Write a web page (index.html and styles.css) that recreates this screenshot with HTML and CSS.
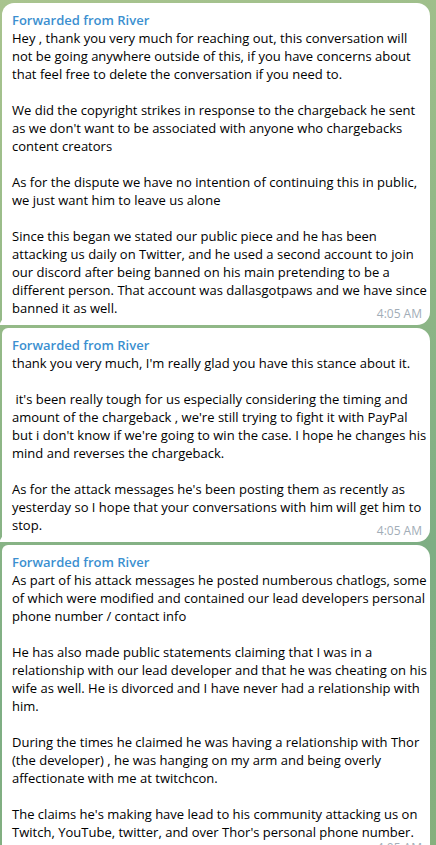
FILE: index.html
```html
<!DOCTYPE html>
<html>
<head>
<meta charset="utf-8">
<link rel="stylesheet" href="styles.css">
</head>
<body>
<div class="chat">
  <div class="bubble first">
    <div class="name">Forwarded from River</div>
    <div class="text">Hey , thank you very much for reaching out, this conversation will<br>not be going anywhere outside of this, if you have concerns about<br>that feel free to delete the conversation if you need to.<br><br>We did the copyright strikes in response to the chargeback he sent<br>as we don't want to be associated with anyone who chargebacks<br>content creators<br><br>As for the dispute we have no intention of continuing this in public,<br>we just want him to leave us alone<br><br>Since this began we stated our public piece and he has been<br>attacking us daily on Twitter, and he used a second account to join<br>our discord after being banned on his main pretending to be a<br>different person. That account was dallasgotpaws and we have since<br>banned it as well.</div>
    <span class="time">4:05 AM</span>
  </div>
  <div class="bubble">
    <div class="name">Forwarded from River</div>
    <div class="text">thank you very much, I'm really glad you have this stance about it.<br><br>&nbsp;it's been really tough for us especially considering the timing and<br>amount of the chargeback , we're still trying to fight it with PayPal<br>but i don't know if we're going to win the case. I hope he changes his<br>mind and reverses the chargeback.<br><br>As for the attack messages he's been posting them as recently as<br>yesterday so I hope that your conversations with him will get him to<br>stop.</div>
    <span class="time">4:05 AM</span>
  </div>
  <div class="bubble time-below">
    <div class="name">Forwarded from River</div>
    <div class="text">As part of his attack messages he posted numberous chatlogs, some<br>of which were modified and contained our lead developers personal<br>phone number / contact info<br><br>He has also made public statements claiming that I was in a<br>relationship with our lead developer and that he was cheating on his<br>wife as well. He is divorced and I have never had a relationship with<br>him.<br><br>During the times he claimed he was having a relationship with Thor<br>(the developer) , he was hanging on my arm and being overly<br>affectionate with me at twitchcon.<br><br>The claims he's making have lead to his community attacking us on<br>Twitch, YouTube, twitter, and over Thor's personal phone number.</div>
    <span class="time">4:05 AM</span>
  </div>
</div>
</body>
</html>
```
FILE: styles.css
```css
html, body {
  margin: 0;
  padding: 0;
  height: 100%;
  overflow: hidden;
}
body {
  background: linear-gradient(160deg, #a9c48f 0%, #93b987 35%, #7eae84 70%, #86b07d 100%);
  font-family: "Open Sans", "DejaVu Sans", sans-serif;
}
.chat {
  display: flex;
  flex-direction: column;
  gap: 3px;
  padding: 3px 6px 0 2px;
}
.bubble {
  position: relative;
  background: #ffffff;
  border-radius: 6px 13px 13px 0;
  padding: 8px 10px 8px 10px;
}
.bubble.first {
  border-top-left-radius: 12px;
}
.bubble.time-below {
  padding-bottom: 18px;
}
.bubble::before {
  content: "";
  position: absolute;
  left: -3px;
  bottom: 0;
  width: 4px;
  height: 7px;
  background: #ffffff;
  clip-path: polygon(0 100%, 100% 0, 100% 100%);
}
.name {
  font-size: 13px;
  line-height: 18px;
  font-weight: 600;
  color: #3b8fd0;
  white-space: nowrap;
}
.text {
  font-size: 13px;
  line-height: 18px;
  color: #000000;
  white-space: nowrap;
  letter-spacing: 0.01px;
}
.time {
  position: absolute;
  right: 8px;
  bottom: 5px;
  font-size: 12px;
  line-height: 12px;
  color: #a2adb7;
}
```
